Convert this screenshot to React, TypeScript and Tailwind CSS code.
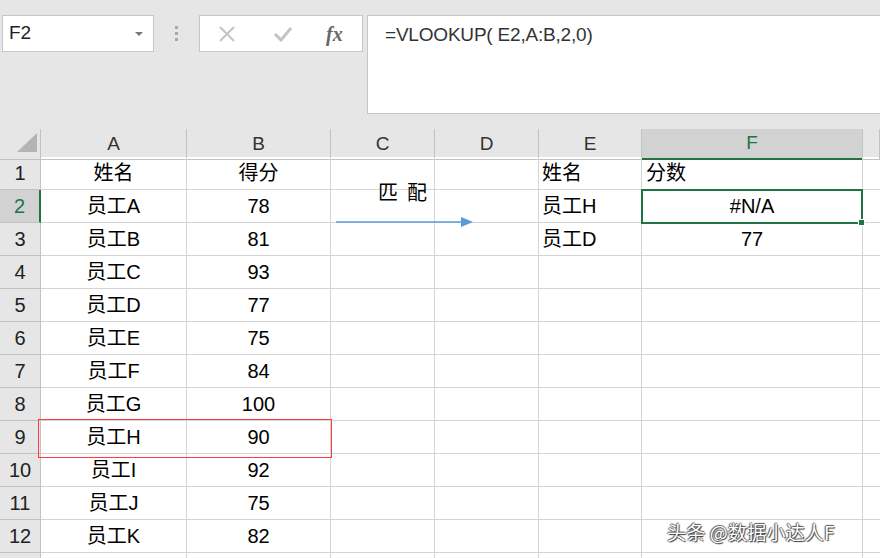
import React from 'react';

const cols = ['A', 'B', 'C', 'D', 'E', 'F', ''];
const colWidths = 'grid-cols-[41px_146px_144px_104px_104px_103px_221px_1fr]';

type Row = { a: string; b: string; e?: string; f?: string };

const rows: Row[] = [
  { a: '姓名', b: '得分', e: '姓名', f: '分数' },
  { a: '员工A', b: '78', e: '员工H', f: '#N/A' },
  { a: '员工B', b: '81', e: '员工D', f: '77' },
  { a: '员工C', b: '93' },
  { a: '员工D', b: '77' },
  { a: '员工E', b: '75' },
  { a: '员工F', b: '84' },
  { a: '员工G', b: '100' },
  { a: '员工H', b: '90' },
  { a: '员工I', b: '92' },
  { a: '员工J', b: '75' },
  { a: '员工K', b: '82' },
  { a: '', b: '' },
];

const font = { fontFamily: '"Liberation Sans", "Noto Sans CJK SC", sans-serif' };

export default function App() {
  return (
    <div className="w-[880px] h-[558px] overflow-hidden bg-white relative" style={font}>
      {/* formula bar */}
      <div className="h-[129px] bg-[#e6e6e6] pt-[15px] flex items-start">
        <div className="ml-[2px] w-[152px] h-[37px] bg-white border border-[#c6c6c6] flex items-center justify-between pl-[6px] pr-[10px]">
          <span className="text-[19px] text-[#222]">F2</span>
          <span className="w-0 h-0 border-l-[4px] border-r-[4px] border-t-[4px] border-l-transparent border-r-transparent border-t-[#777]" />
        </div>
        <div className="w-[45px] h-[37px] flex flex-col items-center justify-center gap-[3px]">
          <span className="w-[3px] h-[3px] bg-[#a8a8a8]" />
          <span className="w-[3px] h-[3px] bg-[#a8a8a8]" />
          <span className="w-[3px] h-[3px] bg-[#a8a8a8]" />
        </div>
        <div className="w-[164px] h-[37px] bg-white border border-[#c6c6c6] flex items-center">
          <svg width="18" height="18" viewBox="0 0 18 18" className="ml-[18px]">
            <path d="M2 2 L16 16 M16 2 L2 16" stroke="#c4c4c4" strokeWidth="2" fill="none" />
          </svg>
          <svg width="20" height="18" viewBox="0 0 20 18" className="ml-[37px]">
            <path d="M2 9 L8 15 L18 3" stroke="#c4c4c4" strokeWidth="3" fill="none" />
          </svg>
          <span
            className="ml-[33px] text-[20px] italic font-bold text-[#666]"
            style={{ fontFamily: '"Liberation Serif", serif' }}
          >
            fx
          </span>
        </div>
        <div className="ml-[4px] flex-1 h-[99px] bg-white border border-[#c6c6c6] border-r-0 pl-[17px] pt-[5px]">
          <span className="text-[19px] text-[#333] tracking-[-0.2px]">=VLOOKUP( E2,A:B,2,0)</span>
        </div>
      </div>

      {/* sheet */}
      <div className="relative">
        <div className={`grid ${colWidths} h-[28px] bg-[#e6e6e6]`}>
          <div className="border-r border-b border-[#c2c2c2] relative">
            <div
              className="absolute left-[17px] top-[4px] w-[20px] h-[19px] bg-[#b4b4b4]"
              style={{ clipPath: 'polygon(100% 0, 100% 100%, 0 100%)' }}
            />
          </div>
          {cols.map((c, i) => (
            <div
              key={i}
              className={
                c === 'F'
                  ? 'bg-[#d2d2d2] border-r border-[#c2c2c2] border-b-2 border-b-[#217346] flex items-center justify-center text-[19px] text-[#217346]'
                  : 'border-r border-b border-[#c2c2c2] flex items-center justify-center text-[19px] text-[#333]'
              }
            >
              {c}
            </div>
          ))}
        </div>

        {rows.map((r, i) => (
          <div key={i} className={`grid ${colWidths} h-[33px]`}>
            <div
              className={
                i === 1
                  ? 'bg-[#d2d2d2] border-b border-[#c2c2c2] border-r-2 border-r-[#217346] flex items-center justify-center text-[20px] text-[#217346]'
                  : 'bg-[#e6e6e6] border-r border-b border-[#c2c2c2] flex items-center justify-center text-[20px] text-[#222]'
              }
            >
              {i < 12 ? i + 1 : ''}
            </div>
            <div className="border-r border-b border-[#d4d4d4] flex items-center justify-center text-[20px] text-black">
              {r.a}
            </div>
            <div className="border-r border-b border-[#d4d4d4] flex items-center justify-center text-[20px] text-black">
              {r.b}
            </div>
            <div className="border-r border-b border-[#d4d4d4]" />
            <div className="border-r border-b border-[#d4d4d4]" />
            <div className="border-r border-b border-[#d4d4d4] flex items-center pl-[3px] text-[20px] text-black">
              {r.e}
            </div>
            <div
              className={`border-r border-b border-[#d4d4d4] flex items-center text-[20px] text-black ${
                i === 0 ? 'pl-[4px]' : 'justify-center'
              }`}
            >
              {r.f}
            </div>
            <div className="border-b border-[#d4d4d4]" />
          </div>
        ))}

        {/* selected cell F2 */}
        <div className="absolute left-[641px] top-[60px] w-[222px] h-[35px] border-2 border-[#217346]" />
        <div className="absolute left-[858px] top-[90px] w-[7px] h-[7px] bg-[#217346] border border-white" />

        {/* 匹 配 text box + arrow */}
        <div className="absolute left-[378px] top-[53px] text-[20px] text-black leading-none" style={{ fontFamily: '"Noto Sans CJK SC", sans-serif' }}>
          匹&nbsp;&nbsp;配
        </div>
        <svg className="absolute left-[335px] top-[86px]" width="140" height="14" viewBox="0 0 140 14">
          <line x1="1" y1="7" x2="128" y2="7" stroke="#5b9bd5" strokeWidth="1.3" />
          <polygon points="126,2 138,7 126,12" fill="#5b9bd5" />
        </svg>

        {/* red box around row 9 */}
        <div className="absolute z-10 left-[38px] top-[290px] w-[294px] h-[39px] border border-[#ff3b3b]" />

        {/* watermark */}
        <div
          className="absolute left-[667px] top-[389px] text-[19px] text-white tracking-[0.2px]"
          style={{
            fontFamily: '"Noto Sans CJK SC", sans-serif',
            textShadow: '1px 1px 1px #333, -1px 0 1px #555, 0 -1px 1px #555',
          }}
        >
          头条 @数据小达人F
        </div>
      </div>
    </div>
  );
}
